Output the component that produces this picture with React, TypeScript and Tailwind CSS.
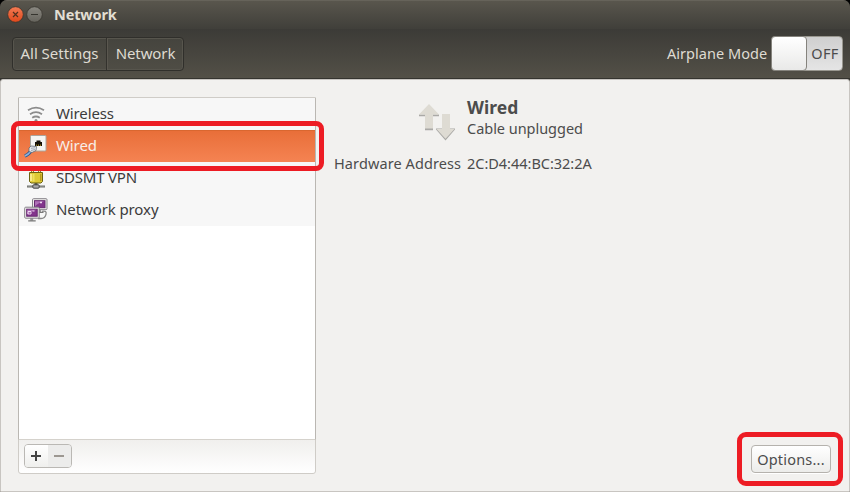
import React from "react";

function WifiIcon() {
  return (
    <svg width="24" height="24" viewBox="0 0 24 24" fill="none" stroke="#8c8c8c" strokeWidth="1.8">
      <path d="M4 8.2Q12 3.2 20 8.2" />
      <path d="M6 12.2Q12 8.2 18 12.2" />
      <path d="M8.2 15.8Q12 13.2 15.8 15.8" />
      <circle cx="12" cy="18.4" r="1.5" fill="#8c8c8c" stroke="none" />
    </svg>
  );
}

function WiredIcon() {
  return (
    <svg width="24" height="24" viewBox="0 0 24 24">
      <rect x="6.5" y="1.5" width="15.5" height="15.5" rx="1" fill="#f5f5f2" stroke="#aaa69e" />
      <path d="M11 12V8h1.5V6.5h4V8H18v4z" fill="#151006" />
      <path d="M12.5 12v-1.5M14.5 12v-1.5M16.5 12v-1.5" stroke="#b99a26" strokeWidth=".8" />
      <path d="M.8 22Q4 21 7.5 16.5" fill="none" stroke="#315c93" strokeWidth="3.4" />
      <path d="M.8 22Q4 21 7.5 16.5" fill="none" stroke="#8db2dc" strokeWidth="1.5" />
      <path d="M5 14 7 12l5.5.5-.5 4-4 2-3-1z" fill="#e6e9ed" stroke="#626870" strokeWidth=".8" />
      <path d="m7 14.3 4-.5M7 16.5l4-1" stroke="#8e98a3" strokeWidth=".8" />
    </svg>
  );
}

function VpnIcon() {
  return (
    <svg width="24" height="24" viewBox="0 0 24 24">
      <path d="M3 20.5h18" stroke="#6d6f6b" strokeWidth="2" />
      <path d="M3.5 20h17" stroke="#b5b7b3" strokeWidth=".7" />
      <path d="M12 17v4" stroke="#555753" strokeWidth="3" />
      <rect x="8.8" y="18.8" width="6.4" height="3.4" rx="1" fill="#aaa" stroke="#444" />
      <path d="M7.5 7V4h2v3M14.5 7V4h2v3" fill="#fff3a1" stroke="#8e8437" />
      <path d="M5.5 6.5h13v9l-1.5 1.5H7l-1.5-1.5z" fill="#dec934" stroke="#6d6213" />
      <path d="M7 8v7" stroke="#fff3a1" strokeWidth="1.6" />
      <path d="M9.5 8v7.5" stroke="#eee05f" strokeWidth="2" />
      <path d="M16.7 8v7" stroke="#b99a20" strokeWidth="1.4" />
    </svg>
  );
}

function Screen({ x, y }: { x: number; y: number }) {
  return (
    <g transform={`translate(${x} ${y})`}>
      <path d="M7.5 11v3" stroke="#999" strokeWidth="3" />
      <path d="M4 14.2h7.5" stroke="#777" strokeWidth="1.3" />
      <rect x=".5" y=".5" width="14.5" height="11" rx="1" fill="#f0efed" stroke="#858288" />
      <rect x="2.5" y="2.5" width="10.5" height="7" fill="#82348c" stroke="#652a70" />
      <path d="M3 3h9.5Q7 4 3 8z" fill="#ae70b7" />
    </g>
  );
}

function ProxyIcon() {
  return (
    <svg width="24" height="24" viewBox="0 0 24 24">
      <Screen x={8} y={0.2} />
      <path d="M18 13.3q5-1 4 3t-5 4.2h-3" fill="none" stroke="#888" strokeWidth="1.3" />
      <Screen x={0.2} y={8.7} />
      <path d="M4 13.5h3v2.5H4z" fill="none" stroke="#f5e6f8" strokeWidth=".9" />
      <path d="M8.5 12.5h2v1h-2zM16 3.8h2v1.5h-2z" fill="#eedcf1" />
    </svg>
  );
}

function Transfer() {
  return (
    <svg className="ml-[85px] mt-[7px] shrink-0" width="37" height="37" viewBox="0 0 37 37">
      <path d="M0 10.5h20v1.8H0zM6 24h8v2.2H6zM17 25.5l9.5 11 9.5-11v-1H17z" fill="#aaa9a6" />
      <path d="M10 0 20 10.5h-6v14H6v-14H0zM23 10h8v15h4.5l-9 9.8L17.5 25H23z" fill="#dedbd3" />
    </svg>
  );
}

const rows = [
  { label: "Wireless", icon: <WifiIcon />, spacing: "tracking-[-0.12px]", selected: false },
  { label: "Wired", icon: <WiredIcon />, spacing: "tracking-[-0.1px]", selected: true },
  { label: "SDSMT VPN", icon: <VpnIcon />, spacing: "tracking-[-0.2px]", selected: false },
  { label: "Network proxy", icon: <ProxyIcon />, spacing: "tracking-[-0.1px]", selected: false },
];

export default function App() {
  return (
    <div className="bg-black">
      <div className="relative flex h-[492px] w-[850px] flex-col overflow-hidden rounded-t-[7px] bg-[#3e3d38] font-['Noto_Sans',sans-serif] text-[15px] leading-5 text-[#3c3c3c]">
        <header className="flex h-[29px] shrink-0 items-center border-t border-[#66635a] bg-linear-to-b from-[#59564d] to-[#403f3a] pl-[7px]">
          <svg width="36" height="18" viewBox="0 0 36 18" className="mr-[11px]">
            <defs>
              <linearGradient id="close" x2="0" y2="1"><stop stopColor="#f37b54" /><stop offset="1" stopColor="#df481b" /></linearGradient>
              <linearGradient id="minimize" x2="0" y2="1"><stop stopColor="#8b8982" /><stop offset="1" stopColor="#65635c" /></linearGradient>
            </defs>
            <circle cx="8.5" cy="8.5" r="7.8" fill="url(#close)" stroke="#37352f" strokeWidth=".8" />
            <path d="m6 6 5 5m0-5-5 5" stroke="#51301e" strokeWidth="1.2" />
            <circle cx="27.5" cy="8.5" r="7.8" fill="url(#minimize)" stroke="#37352f" strokeWidth=".8" />
            <path d="M24 8.5h7" stroke="#36352f" strokeWidth="1.2" />
          </svg>
          <h1 className="pb-[2px] text-[14.5px] font-bold tracking-[-0.15px] text-[#e3ded2]">Network</h1>
        </header>

        <nav className="flex h-[50px] shrink-0 items-center justify-between border-b border-[#35342f] bg-linear-to-b from-[#3c3b37] to-[#535047] pl-3 pr-[7px] text-[#dfdbd2]">
          <div className="flex h-[34px] rounded-[4px] border border-[#302f2b] bg-linear-to-b from-[#45443e] to-[#4f4d45] shadow-[inset_0_0_0_1px_#57554d]">
            <button className="w-[94px] whitespace-nowrap border-r border-[#33322d] pb-[2px] text-[15px] tracking-[-0.02px]">All Settings</button>
            <button className="w-[76px] border-l border-[#5a574f] pb-[2px] text-[15px] tracking-[-0.1px]">Network</button>
          </div>
          <div className="flex items-center">
            <span className="mr-1 w-[100px] whitespace-nowrap pb-[2px] text-[14.5px] tracking-[0.04px]">Airplane Mode</span>
            <div className="flex h-[35px] w-[72px] rounded-[4px] border border-[#99978f] bg-linear-to-b from-[#cfcfcf] to-[#e5e5e5] text-[#4c4c4c]">
              <div className="-m-px w-[36px] shrink-0 rounded-[4px] border border-[#85837d] bg-linear-to-b from-white to-[#e9e9e8]" />
              <span className="flex w-[37px] items-center justify-center pb-[1px] pl-[2px] text-[14.5px] tracking-[0.3px]">OFF</span>
            </div>
          </div>
        </nav>

        <main className="flex min-h-0 flex-1 rounded-t-[3px] border border-[#c8c5c1] bg-[#f2f1ef] pl-[17px] pt-[17px]">
          <section className="flex h-[377px] w-[298px] shrink-0 flex-col rounded-b-[3px] border border-[#cfccc7]">
            <div className="-mx-px h-[342px] border-x border-b border-x-[#bab7b2] border-b-[#d5d2cc] bg-white">
              {rows.map((row) => (
                <div key={row.label} className={row.selected ? "flex h-8 items-center bg-linear-to-b from-[#e86e38] to-[#f58352] pl-[5px] text-[#f8eee8] shadow-[inset_0_1px_0_#d96730]" : "flex h-8 items-center bg-[#f7f7f7] pl-[5px]"}>
                  {row.icon}
                  <span className={"ml-2 pb-[2px] " + row.spacing}>{row.label}</span>
                </div>
              ))}
            </div>
            <div className="flex flex-1 items-start rounded-b-[3px] bg-linear-to-b from-[#f0efed] to-white pl-[5px] pt-[4px]">
              <div className="flex h-[24px] w-[48px] overflow-hidden rounded-[4px] border border-[#bab8b4]">
                <button className="flex w-[23px] items-center justify-center bg-linear-to-b from-white to-[#efefed]" aria-label="Add">
                  <svg width="12" height="12"><path d="M1 6h10M6 1v10" stroke="#444" strokeWidth="2" /></svg>
                </button>
                <button className="flex w-[24px] items-center justify-center bg-[#ececeb]" aria-label="Remove">
                  <svg width="12" height="12"><path d="M1 6h10" stroke="#9c9791" strokeWidth="2" /></svg>
                </button>
              </div>
            </div>
          </section>

          <section className="ml-[18px] flex flex-1 flex-col text-[#4c4c4c]">
            <div className="flex">
              <Transfer />
              <div className="-mt-px ml-[11px]">
                <h2 className="text-[17.5px] font-bold leading-[22px] tracking-[0.05px]">Wired</h2>
                <p className="text-[14.5px] leading-5 tracking-[-0.03px]">Cable unplugged</p>
              </div>
            </div>
            <div className="mt-[12px] flex whitespace-nowrap text-[14.5px]">
              <span className="w-[133px] tracking-[0.1px]">Hardware Address</span>
              <span className="tracking-[-0.02px]">2C:D4:44:BC:32:2A</span>
            </div>
            <button className="mb-[18px] ml-auto mr-[18px] mt-auto h-[28px] w-[80px] rounded-[4px] border border-[#b5b2ad] bg-linear-to-b from-white to-[#ececea] text-[14.5px] tracking-[0.2px] shadow-[0_1px_0_#fff]">Options...</button>
          </section>
        </main>

        <div className="pointer-events-none absolute left-[11px] top-[121px] h-[50px] w-[313px] rounded-[8px] border-[5px] border-[#ed1c24]" />
        <div className="pointer-events-none absolute left-[737px] top-[432px] h-[54px] w-[106px] rounded-[9px] border-[5px] border-[#ed1c24]" />
      </div>
    </div>
  );
}
